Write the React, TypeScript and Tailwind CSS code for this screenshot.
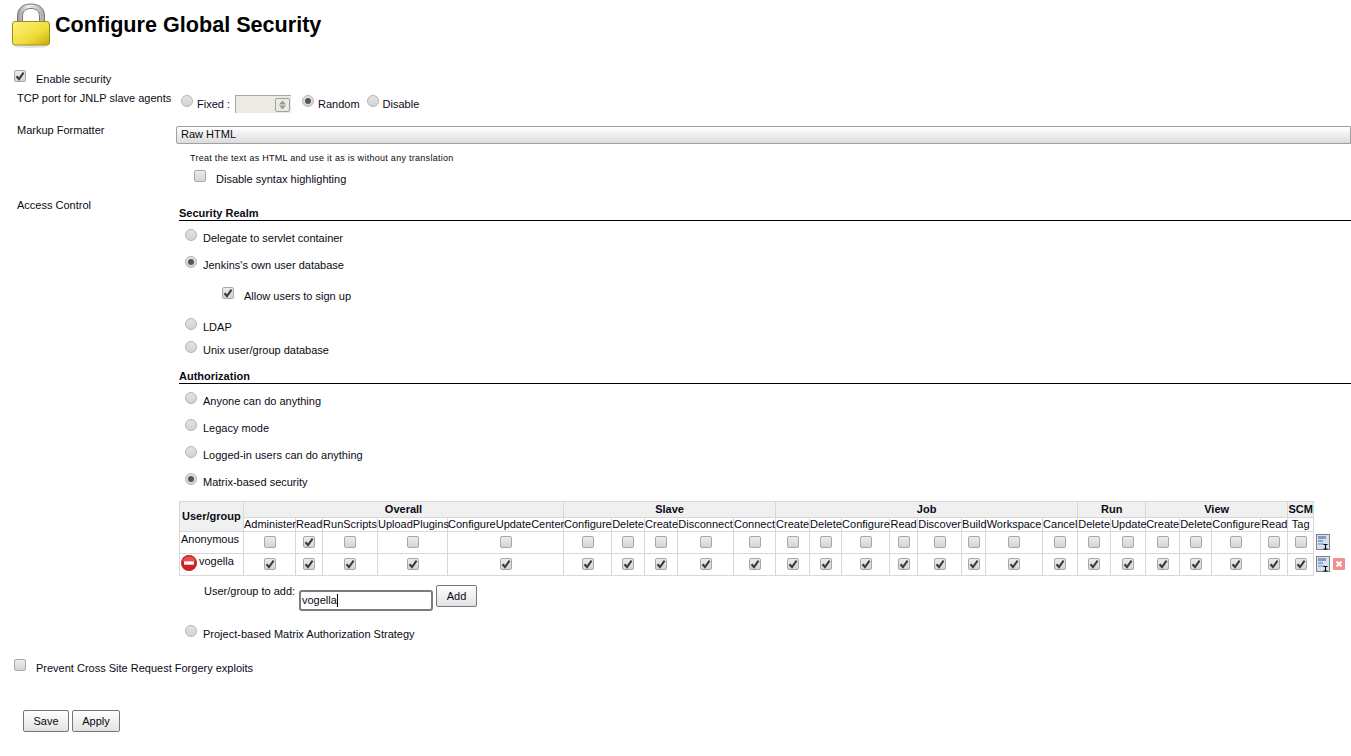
import React from 'react';

type Col = { name: string; width: string };

const groups = [
    { name: 'Overall', span: 5 },
    { name: 'Slave', span: 5 },
    { name: 'Job', span: 8 },
    { name: 'Run', span: 2 },
    { name: 'View', span: 4 },
    { name: 'SCM', span: 1 },
];

const cols: Col[] = [
    { name: 'Administer', width: 'w-[52px]' },
    { name: 'Read', width: 'w-[27px]' },
    { name: 'RunScripts', width: 'w-[55px]' },
    { name: 'UploadPlugins', width: 'w-[70px]' },
    { name: 'ConfigureUpdateCenter', width: 'w-[116px]' },
    { name: 'Configure', width: 'w-[48px]' },
    { name: 'Delete', width: 'w-[33px]' },
    { name: 'Create', width: 'w-[33px]' },
    { name: 'Disconnect', width: 'w-[56px]' },
    { name: 'Connect', width: 'w-[42px]' },
    { name: 'Create', width: 'w-[34px]' },
    { name: 'Delete', width: 'w-[32px]' },
    { name: 'Configure', width: 'w-[48px]' },
    { name: 'Read', width: 'w-[28px]' },
    { name: 'Discover', width: 'w-[44px]' },
    { name: 'Build', width: 'w-[24px]' },
    { name: 'Workspace', width: 'w-[57px]' },
    { name: 'Cancel', width: 'w-[35px]' },
    { name: 'Delete', width: 'w-[33px]' },
    { name: 'Update', width: 'w-[35px]' },
    { name: 'Create', width: 'w-[34px]' },
    { name: 'Delete', width: 'w-[32px]' },
    { name: 'Configure', width: 'w-[49px]' },
    { name: 'Read', width: 'w-[27px]' },
    { name: 'Tag', width: 'w-[26px]' },
];

// indexes Anonymous has ticked: only Overall/Read
const anonymousChecked = [1];

const Check = ({ checked = false, className = '' }: { checked?: boolean; className?: string }) => (
    <span className={`inline-flex h-[12px] w-[12px] shrink-0 items-center justify-center rounded-[2px] border border-[#a8a8a8] bg-gradient-to-b from-[#ececec] to-[#d4d4d4] ${className}`}>
        {checked && (
            <svg width="10" height="10" viewBox="0 0 10 10">
                <path d="M1.5 5.2 L4 8 L8.6 1.6" fill="none" stroke="#3c3c3c" strokeWidth="2.1" />
            </svg>
        )}
    </span>
);

const Radio = ({ checked = false, className = '' }: { checked?: boolean; className?: string }) => (
    <span className={`inline-flex h-[12px] w-[12px] shrink-0 items-center justify-center rounded-full border border-[#b4b4b4] bg-gradient-to-b from-[#e4e4e4] to-[#d2d2d2] ${className}`}>
        {checked && <span className="h-[6px] w-[6px] rounded-full bg-[#555555]" />}
    </span>
);

const RadioRow = ({ label, checked, className = '' }: { label: string; checked?: boolean; className?: string }) => (
    <div className={`flex h-[20px] items-center pl-[9px] ${className}`}>
        <Radio checked={checked} className="mb-[6px]" />
        <span className="ml-[6px]">{label}</span>
    </div>
);

const SectionHeader = ({ title, className = '' }: { title: string; className?: string }) => (
    <div className={`ml-[3px] h-[15px] border-b border-black font-bold leading-[14px] ${className}`}>{title}</div>
);

const LockIcon = () => (
    <svg width="38" height="45" viewBox="0 0 38 45" className="shrink-0">
        <defs>
            <linearGradient id="lockBody" x1="0" y1="0" x2="1" y2="1">
                <stop offset="0" stopColor="#fff27a" />
                <stop offset="0.6" stopColor="#f0dc3c" />
                <stop offset="1" stopColor="#c4ac0c" />
            </linearGradient>
            <linearGradient id="lockShackle" x1="0" y1="0" x2="1" y2="0">
                <stop offset="0" stopColor="#9a9a9a" />
                <stop offset="0.4" stopColor="#f2f2f2" />
                <stop offset="1" stopColor="#a8a8a8" />
            </linearGradient>
        </defs>
        <ellipse cx="19" cy="43.5" rx="17" ry="1.5" fill="#e2e2e2" />
        <path d="M5.5 19 V13 C5.5 5.5 10.5 1 19 1 C27.5 1 32.5 5.5 32.5 13 V19 H27.5 V13 C27.5 8.5 24.5 5.5 19 5.5 C13.5 5.5 10.5 8.5 10.5 13 V19 Z" fill="url(#lockShackle)" stroke="#777777" strokeWidth="1" />
        <rect x="0.5" y="18.5" width="37" height="23.5" rx="2.5" fill="url(#lockBody)" stroke="#a08e14" />
    </svg>
);

const RemoveCircle = () => (
    <svg width="16" height="16" viewBox="0 0 16 16" className="shrink-0">
        <circle cx="8" cy="8" r="7.7" fill="#d51f1f" stroke="#9c1010" strokeWidth="0.6" />
        <path d="M1.5 6 A7 7 0 0 1 14.5 6 Z" fill="#ea5050" />
        <rect x="3" y="6.3" width="10" height="3.4" fill="#ffffff" />
    </svg>
);

const DocIcon = () => (
    <svg width="14" height="16" viewBox="0 0 14 16" className="shrink-0">
        <rect x="0.5" y="0.5" width="13" height="15" fill="#d6dfeb" stroke="#808080" />
        <rect x="2" y="2" width="8" height="3" fill="#7f9cc8" />
        <rect x="2" y="6" width="5" height="2" fill="#8fa8d0" />
        <rect x="2" y="9" width="6" height="2" fill="#9fb4d6" />
        <path d="M7.5 10.5 H11.5 M9.5 10.5 V15 M7.5 15 H11.5" stroke="#000000" strokeWidth="1" fill="none" />
    </svg>
);

const RemoveSquare = () => (
    <svg width="12" height="12" viewBox="0 0 12 12" className="ml-[3px] shrink-0">
        <rect x="0" y="0" width="12" height="12" rx="1" fill="#ef8f8f" />
        <path d="M3.5 3.5 L8.5 8.5 M8.5 3.5 L3.5 8.5" stroke="#ffffff" strokeWidth="1.8" />
    </svg>
);

const GrayButton = ({ label, className = '' }: { label: string; className?: string }) => (
    <button className={`h-[22px] rounded-[2px] border border-[#777777] bg-gradient-to-b from-white to-[#e2e2e2] text-center ${className}`}>
        {label}
    </button>
);

const App = () => {
    return (
        <div className="h-[756px] w-[1351px] overflow-hidden bg-white font-['Liberation_Sans',Arial,sans-serif] text-[11px] text-[#0a0a14]">
            <div className="flex h-[70px] items-start pl-[12px] pt-[3px]">
                <LockIcon />
                <h1 className="ml-[5px] mt-[7px] text-[21.6px] font-bold leading-[30px] text-black">Configure Global Security</h1>
            </div>

            <div className="flex h-[18px] items-center pl-[14px]">
                <Check checked className="mb-[6px]" />
                <span className="ml-[10px]">Enable security</span>
            </div>

            <div className="grid h-[26px] grid-cols-[176px_1fr]">
                <div className="flex h-[20px] items-center pl-[17px]">TCP port for JNLP slave agents</div>
                <div className="flex h-[20px] items-center pl-[5px] pt-[12px]">
                    <Radio className="mb-[6px]" />
                    <span className="ml-[4px]">Fixed :</span>
                    <span className="ml-[5px] flex h-[18px] w-[56px] items-center justify-end border-l border-t border-[#a8a8a8] bg-[#ebebe4] pr-[1px]">
                        <span className="flex h-[14px] w-[15px] items-center justify-center rounded-[2px] border border-[#a0a0a0]">
                            <svg width="9" height="10" viewBox="0 0 9 10">
                                <path d="M4.5 0.5 L8 4.5 H1 Z M1 5.5 H8 L4.5 9.5 Z" fill="#999999" />
                            </svg>
                        </span>
                    </span>
                    <Radio checked className="mb-[6px] ml-[11px]" />
                    <span className="ml-[4px]">Random</span>
                    <Radio className="mb-[6px] ml-[7px]" />
                    <span className="ml-[4px]">Disable</span>
                </div>
            </div>

            <div className="grid grid-cols-[176px_1fr]">
                <div className="mt-[6px] flex h-[20px] items-center pl-[17px]">Markup Formatter</div>
                <div className="pt-[12px]">
                    <div className="flex h-[18px] items-center rounded-l-[2px] border border-[#a0a0a0] bg-gradient-to-b from-white to-[#dcdcdc] pb-[2px] pl-[4px]">Raw HTML</div>
                    <div className="ml-[14px] mt-[7px] h-[14px] text-[9px] leading-[14px] tracking-[0.28px]">Treat the text as HTML and use it as is without any translation</div>
                    <div className="ml-[18px] mt-[4px] flex h-[20px] items-center">
                        <Check className="mb-[6px]" />
                        <span className="ml-[10px]">Disable syntax highlighting</span>
                    </div>
                </div>
            </div>

            <div className="grid grid-cols-[176px_1fr]">
                <div className="mt-[6px] flex h-[20px] items-center pl-[17px]">Access Control</div>
                <div className="pt-[17px]">
                    <SectionHeader title="Security Realm" />
                    <RadioRow label="Delegate to servlet container" className="mt-[7px]" />
                    <RadioRow label="Jenkins's own user database" checked className="mt-[7px]" />
                    <div className="ml-[46px] mt-[11px] flex h-[20px] items-center">
                        <Check checked className="mb-[6px]" />
                        <span className="ml-[10px]">Allow users to sign up</span>
                    </div>
                    <RadioRow label="LDAP" className="mt-[11px]" />
                    <RadioRow label="Unix user/group database" className="mt-[3px]" />

                    <SectionHeader title="Authorization" className="mt-[9px]" />
                    <RadioRow label="Anyone can do anything" className="mt-[7px]" />
                    <RadioRow label="Legacy mode" className="mt-[7px]" />
                    <RadioRow label="Logged-in users can do anything" className="mt-[7px]" />
                    <RadioRow label="Matrix-based security" checked className="mt-[7px]" />

                    <table className="ml-[3px] mt-[9px] w-[1171px] table-fixed border-collapse leading-[13px]">
                        <colgroup>
                            <col className="w-[64px]" />
                            {cols.map((c, i) => <col key={i} className={c.width} />)}
                            <col className="w-[37px]" />
                        </colgroup>
                        <thead>
                            <tr className="h-[16px]">
                                <th rowSpan={2} className="border border-[#d8d8d8] bg-[#f0f0f0] pl-[2px] text-left font-bold">User/group</th>
                                {groups.map((g) => (
                                    <th key={g.name} colSpan={g.span} className="border border-[#d8d8d8] bg-[#f0f0f0] p-0 text-center font-bold">{g.name}</th>
                                ))}
                            </tr>
                            <tr className="h-[14px]">
                                {cols.map((c, i) => (
                                    <th key={i} className="whitespace-nowrap border border-[#d8d8d8] p-0 text-center font-normal">{c.name}</th>
                                ))}
                            </tr>
                        </thead>
                        <tbody>
                            <tr className="h-[22px]">
                                <td className="border border-[#d8d8d8] pl-[1px] align-top leading-[15px]">Anonymous</td>
                                {cols.map((c, i) => (
                                    <td key={i} className="border border-[#d8d8d8] p-0 text-center align-top">
                                        <Check checked={anonymousChecked.includes(i)} className="mt-[4px] align-top" />
                                    </td>
                                ))}
                                <td className="pl-[2px] align-top">
                                    <div className="flex items-center pt-[2px]"><DocIcon /></div>
                                </td>
                            </tr>
                            <tr className="h-[22px]">
                                <td className="border border-[#d8d8d8] pl-[1px] align-top">
                                    <div className="flex items-start pt-[1px]">
                                        <RemoveCircle />
                                        <span className="ml-[2px]">vogella</span>
                                    </div>
                                </td>
                                {cols.map((c, i) => (
                                    <td key={i} className="border border-[#d8d8d8] p-0 text-center align-top">
                                        <Check checked className="mt-[4px] align-top" />
                                    </td>
                                ))}
                                <td className="pl-[2px] align-top">
                                    <div className="flex items-center pt-[2px]">
                                        <DocIcon />
                                        <RemoveSquare />
                                    </div>
                                </td>
                            </tr>
                        </tbody>
                    </table>

                    <div className="flex items-start pl-[28px]">
                        <span className="mt-[6px] w-[91px] whitespace-nowrap leading-[18px]">User/group to add:</span>
                        <div className="ml-[4px] mt-[14px] flex h-[21px] w-[134px] items-center rounded-[3px] border-2 border-[#7c7c7c] pl-[1px]">
                            vogella<span className="h-[13px] w-px bg-black" />
                        </div>
                        <GrayButton label="Add" className="ml-[3px] mt-[9px] w-[41px]" />
                    </div>

                    <RadioRow label="Project-based Matrix Authorization Strategy" className="mt-[13px]" />
                </div>
            </div>

            <div className="mt-[15px] flex h-[18px] items-center pl-[14px]">
                <Check className="mb-[6px]" />
                <span className="ml-[10px]">Prevent Cross Site Request Forgery exploits</span>
            </div>

            <div className="mt-[33px] flex gap-[3px] pl-[23px]">
                <GrayButton label="Save" className="w-[46px]" />
                <GrayButton label="Apply" className="w-[48px]" />
            </div>
        </div>
    );
};

export default App;
